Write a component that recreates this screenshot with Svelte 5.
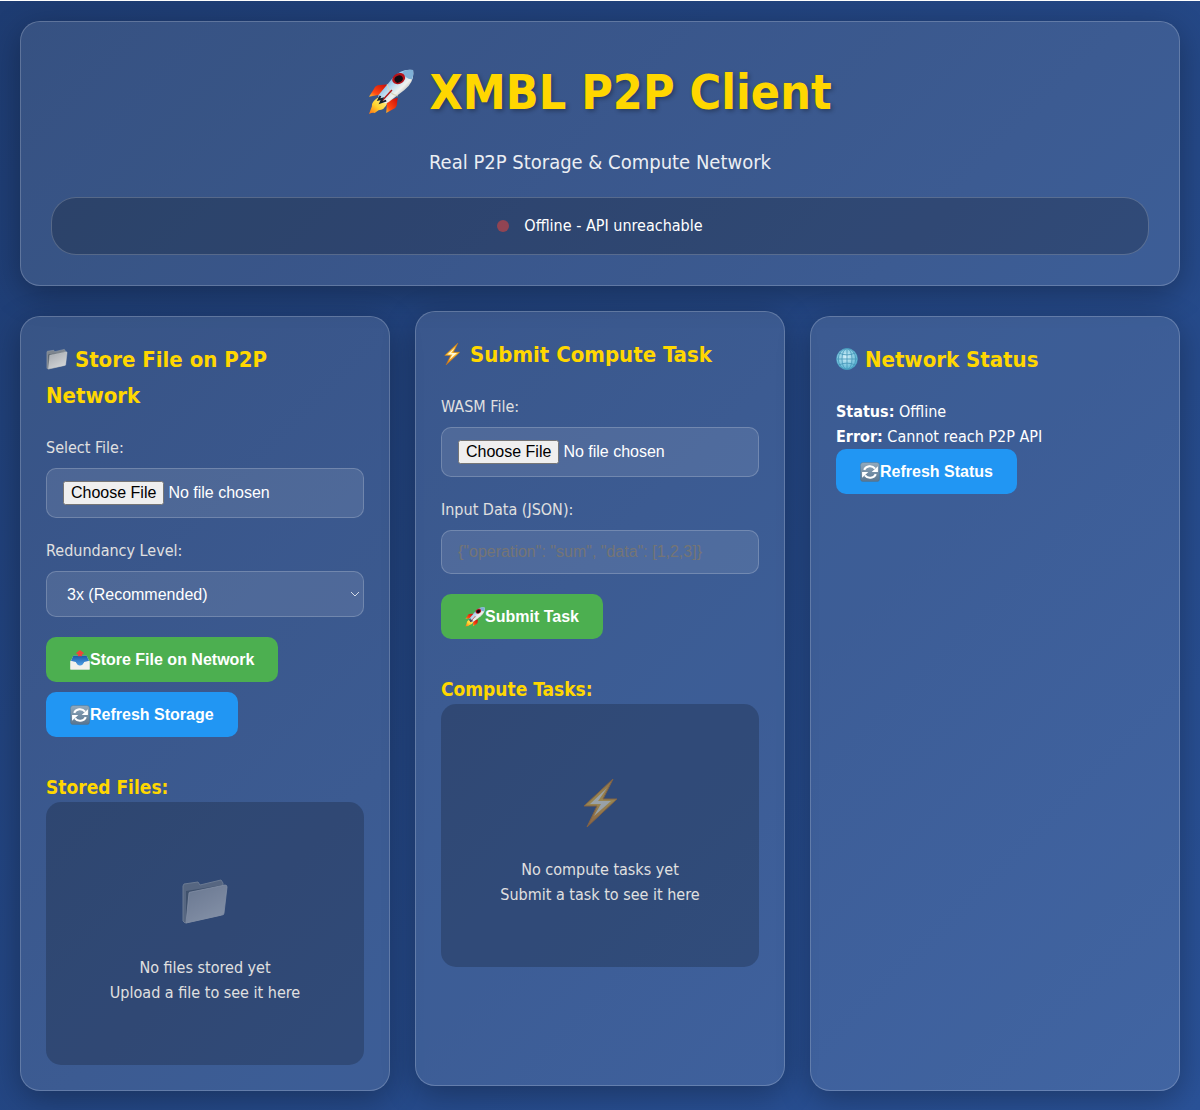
<script>
  let redundancy = $state('3');
  let taskInput = $state('');
</script>

{#snippet icon(name, size)}
  <svg class="icon {size}" viewBox="0 0 48 48" aria-hidden="true"><use href="#{name}" /></svg>
{/snippet}

<svg class="sprite" aria-hidden="true">
  <defs>
    <linearGradient id="hull" x1="0" y1="0" x2="1" y2="1">
      <stop offset=".1" stop-color="#2f79bd" />
      <stop offset=".4" stop-color="#a9d2ee" />
      <stop offset=".6" stop-color="#f2f2ee" />
      <stop offset=".9" stop-color="#77797a" />
    </linearGradient>
    <linearGradient id="fin" x1="0" y1="1" x2="1" y2="0">
      <stop offset="0" stop-color="#ffc02a" />
      <stop offset=".3" stop-color="#ff4a12" />
      <stop offset="1" stop-color="#c80808" />
    </linearGradient>
    <linearGradient id="flame" x1="0" y1="1" x2="1" y2="0">
      <stop offset="0" stop-color="#ff6a10" />
      <stop offset=".45" stop-color="#ffd62e" />
      <stop offset="1" stop-color="#fff3a0" />
    </linearGradient>
    <linearGradient id="sheet" x1="0" y1="0" x2=".6" y2="1">
      <stop offset="0" stop-color="#a2a7ad" />
      <stop offset="1" stop-color="#d3d5d7" />
    </linearGradient>
    <linearGradient id="gold" x1="0" y1="0" x2="0" y2="1">
      <stop offset="0" stop-color="#f3a21b" />
      <stop offset=".5" stop-color="#ffc22d" />
      <stop offset="1" stop-color="#e5780c" />
    </linearGradient>
    <linearGradient id="tile" x1="0" y1="0" x2="0" y2="1">
      <stop offset="0" stop-color="#93aabd" />
      <stop offset="1" stop-color="#587590" />
    </linearGradient>
    <linearGradient id="well" x1="0" y1="0" x2="0" y2="1">
      <stop offset="0" stop-color="#1b5ba8" />
      <stop offset="1" stop-color="#4fa3ea" />
    </linearGradient>
    <radialGradient id="ocean" cx=".45" cy=".4" r=".6">
      <stop offset="0" stop-color="#d9f3fb" />
      <stop offset="1" stop-color="#55b3d3" />
    </radialGradient>
  </defs>

  <symbol id="rocket" viewBox="0 0 48 48">
    <path d="M22 16 10 17Q7 18 6 21L1 29 16 26Z" fill="url(#fin)" />
    <path d="M31 30 30 38Q29 41 26 42L19 46 20 33Z" fill="url(#fin)" />
    <path d="M10 30Q3 35 4 39L1 47Q5 45 7 46L11 43Q17 43 20 36Z" fill="url(#flame)" />
    <path d="M47 1Q35-1 26 9L11 27Q10 31 13 34 17 37 21 35L38 22Q49 13 47 1Z" fill="url(#hull)" />
    <path d="M47 1Q41 0 36 3 38 10 46 11 48 6 47 1Z" fill="#7fb0d6" />
    <path d="M20 16Q22 27 31 28" fill="none" stroke="#d8d4b8" stroke-width="1.2" />
    <path d="M25 22 14 34" stroke="#b01515" stroke-width="1.500" />
    <path d="M13 28 11 32 15 31 13 35 19 33" fill="none" stroke="#16222e" stroke-width="2" />
    <ellipse cx="32" cy="10" rx="7" ry="5.500" fill="#b5121a" transform="rotate(-28 32 10)" />
    <ellipse cx="32" cy="10.500" rx="4.500" ry="3.600" fill="#120c12" transform="rotate(-28 32 10.500)" />
  </symbol>

  <symbol id="folder" viewBox="0 0 48 48">
    <path d="M2 9 3 7 17 5 19 8 40 3 42 6 40 38 4 46 2 44Z" fill="#7d858e" stroke="#a5abb0" />
    <path d="M5 14 42 8 40 37 5 46Z" fill="#4f5a66" />
    <path d="M8 16Q8 15 10 15L44 8Q46 8 46 10L43 36Q43 38 41 38L5 46Z" fill="url(#sheet)" stroke="#d5d7d8" stroke-width=".8" />
  </symbol>

  <symbol id="bolt" viewBox="0 0 48 48">
    <path d="M37 0 8 27 21 27 11 48 41 20 27 20Z" fill="url(#gold)" stroke="#cf7913" stroke-width="1" />
    <path d="M31 9 14 25 25 25 18 37 35 22 22 22Z" fill="#fff8d8" />
  </symbol>

  <symbol id="refresh" viewBox="0 0 48 48">
    <rect x="1" y="1" width="46" height="46" rx="7" fill="url(#tile)" stroke="#536d84" />
    <path d="M10 19A15 14 0 0 1 36 16M38 29A15 14 0 0 1 12 32" fill="none" stroke="#fff" stroke-width="5" />
    <path d="M43 10V24H28ZM5 38V24H20Z" fill="#fff" />
  </symbol>

  <symbol id="outbox" viewBox="0 0 48 48">
    <path d="M8 14H40L47 28V47H1V28Z" fill="#d5dbe0" />
    <path d="M8 14H40L46 27 33 31Q30 38 24 38T15 31L2 27Z" fill="url(#well)" />
    <path d="M1 26 14 29Q17 38 24 38T34 29L47 26V47H1Z" fill="#f2f1ec" />
    <path d="M24 0 34 8 29 10V15H19V10L14 8Z" fill="#f04438" />
  </symbol>

  <symbol id="globe" viewBox="0 0 48 48">
    <circle cx="24" cy="24" r="23" fill="url(#ocean)" stroke="#4da5c4" />
    <g fill="none" stroke="#4597b8" stroke-width="1.800">
      <path d="M24 1V47M1 24H47M6 11Q24 19 42 11M6 37Q24 29 42 37" />
      <ellipse cx="24" cy="24" rx="11" ry="23" />
      <ellipse cx="24" cy="24" rx="19" ry="23" />
    </g>
  </symbol>
</svg>

<div class="page">
  <header class="panel hero">
    <h1>{@render icon('rocket', 'title')} XMBL P2P Client</h1>
    <p>Real P2P Storage &amp; Compute Network</p>
    <div class="connection" role="status"><span class="dot"></span>Offline - API unreachable</div>
  </header>

  <main>
    <section class="panel card">
      <h2>{@render icon('folder', 'heading')} Store File on P2P Network</h2>
      <div class="field">
        <label for="store-file">Select File:</label>
        <input id="store-file" type="file" />
      </div>
      <div class="field">
        <label for="redundancy">Redundancy Level:</label>
        <select id="redundancy" bind:value={redundancy}>
          <option value="1">1x (No redundancy)</option>
          <option value="3">3x (Recommended)</option>
          <option value="5">5x (High redundancy)</option>
        </select>
      </div>
      <div class="actions">
        <button type="button">{@render icon('outbox', 'inline')}Store File on Network</button>
        <button type="button" class="secondary">{@render icon('refresh', 'inline')}Refresh Storage</button>
      </div>
      <h3>Stored Files:</h3>
      <div class="empty">
        {@render icon('folder', 'large')}
        <p>No files stored yet<br />Upload a file to see it here</p>
      </div>
    </section>

    <section class="panel card raised">
      <h2>{@render icon('bolt', 'heading')} Submit Compute Task</h2>
      <div class="field">
        <label for="wasm-file">WASM File:</label>
        <input id="wasm-file" type="file" />
      </div>
      <div class="field">
        <label for="task-input">Input Data (JSON):</label>
        <input id="task-input" type="text" placeholder={'{"operation": "sum", "data": [1,2,3]}'} bind:value={taskInput} />
      </div>
      <div class="actions">
        <button type="button">{@render icon('rocket', 'inline')}Submit Task</button>
      </div>
      <h3>Compute Tasks:</h3>
      <div class="empty">
        {@render icon('bolt', 'large')}
        <p>No compute tasks yet<br />Submit a task to see it here</p>
      </div>
    </section>

    <section class="panel card">
      <h2>{@render icon('globe', 'heading')} Network Status</h2>
      <p><strong>Status:</strong> Offline</p>
      <p><strong>Error:</strong> Cannot reach P2P API</p>
      <div class="actions">
        <button type="button" class="secondary">{@render icon('refresh', 'inline')}Refresh Status</button>
      </div>
    </section>
  </main>
</div>

<style>
  :global(body) {
    margin: 0;
    background: #1e3c72;
  }

  .page {
    box-sizing: border-box;
    min-height: 100vh;
    padding: 20px;
    border-top: 1px solid #fff;
    background: linear-gradient(135deg, #1e3c72, #2a5298);
    color: #fff;
    font: 16px/25px Tahoma, "DejaVu Sans Condensed", "Noto Sans", sans-serif;
  }

  .sprite {
    position: absolute;
    width: 0;
    height: 0;
  }

  h1, h2, h3, p {
    margin: 0;
  }

  h1, h2, h3 {
    color: #ffd700;
  }

  .panel {
    border: 1px solid rgba(255, 255, 255, 0.2);
    border-radius: 20px;
    background: rgba(255, 255, 255, 0.11);
    box-shadow: 0 8px 32px rgba(0, 0, 0, 0.3);
  }

  .hero {
    margin-bottom: 30px;
    padding: 30px;
    text-align: center;
  }

  h1 {
    margin-bottom: 13px;
    font-size: 48px;
    line-height: 80px;
    text-shadow: 2px 2px 4px rgba(0, 0, 0, 0.3);
  }

  .hero p {
    margin-bottom: 18px;
    font-size: 20px;
    line-height: 34px;
    opacity: 0.9;
  }

  .connection {
    display: flex;
    align-items: center;
    justify-content: center;
    gap: 15px;
    padding: 15px;
    border: 1px solid rgba(255, 255, 255, 0.2);
    border-radius: 25px;
    background: rgba(0, 0, 0, 0.2);
    line-height: 26px;
  }

  .dot {
    width: 12px;
    height: 12px;
    border-radius: 50%;
    background: #f44336;
    opacity: 0.5;
  }

  main {
    display: grid;
    grid-template-columns: repeat(auto-fit, minmax(350px, 1fr));
    gap: 25px;
  }

  .card {
    padding: 25px;
  }

  .raised {
    transform: translateY(-5px);
  }

  h2 {
    margin-bottom: 21px;
    font-size: 22px;
    line-height: 36px;
  }

  h3 {
    margin-top: 35px;
    font-size: 19px;
    line-height: 30px;
  }

  .field {
    margin-bottom: 20px;
  }

  label {
    display: block;
    margin-bottom: 7px;
    color: #e0e0e0;
    line-height: 26px;
  }

  input,
  select {
    box-sizing: border-box;
    display: block;
    width: 100%;
    border: 1px solid rgba(255, 255, 255, 0.2);
    border-radius: 10px;
    background: rgba(255, 255, 255, 0.1);
    color: #fff;
    font: 16px "Liberation Sans", Arial, sans-serif;
  }

  input {
    padding: 12px 16px;
  }

  select {
    height: 46px;
    padding: 12px 20px;
    appearance: none;
    background-image: url("data:image/svg+xml,%3Csvg xmlns='http://www.w3.org/2000/svg' width='10' height='6'%3E%3Cpath d='M1 1l4 4 4-4' fill='none' stroke='%23d3dae6'/%3E%3C/svg%3E");
    background-repeat: no-repeat;
    background-position: right 3px center;
  }

  option {
    color: #222;
  }

  input::placeholder {
    color: #757575;
  }

  .actions {
    display: flex;
    flex-direction: column;
    align-items: flex-start;
    gap: 10px;
  }

  button {
    display: flex;
    align-items: center;
    padding: 12px 24px;
    border: 0;
    border-radius: 10px;
    background: #4caf50;
    color: #fff;
    font: bold 16px/21px "Liberation Sans", Arial, sans-serif;
    cursor: pointer;
  }

  .secondary {
    background: #2196f3;
  }

  .icon {
    flex: none;
  }

  .title {
    width: 46px;
    height: 46px;
    vertical-align: -6px;
  }

  .heading {
    width: 22px;
    height: 22px;
    vertical-align: -3px;
  }

  .inline {
    width: 20px;
    height: 20px;
  }

  .large {
    width: 48px;
    height: 48px;
    margin: 15px 0 30px;
    opacity: 0.5;
  }

  .empty {
    display: flex;
    flex-direction: column;
    align-items: center;
    padding: 60px 20px;
    border-radius: 15px;
    background: rgba(0, 0, 0, 0.2);
    text-align: center;
  }

  .empty p {
    color: #e0e0e0;
  }
</style>
